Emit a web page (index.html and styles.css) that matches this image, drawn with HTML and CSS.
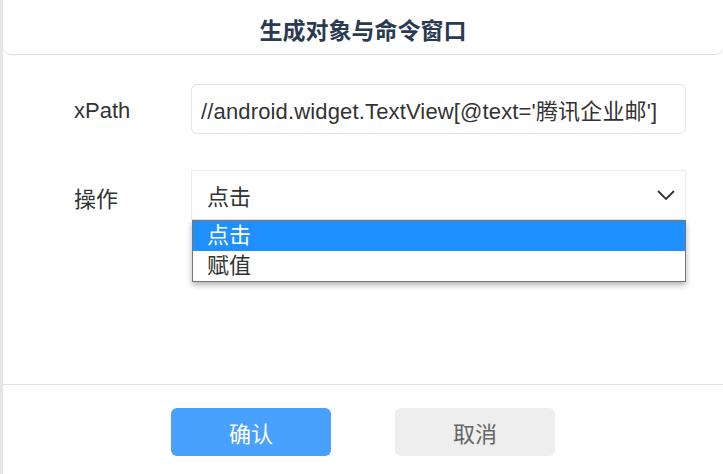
FILE: index.html
```html
<!DOCTYPE html>
<html lang="zh-CN">
<head>
    <meta charset="UTF-8">
    <meta name="viewport" content="width=device-width, initial-scale=1.0">
    <title>生成对象与命令窗口</title>
    <link rel="stylesheet" href="styles.css">
</head>
<body>
    <div class="dialog">
        <div class="dialog-header">
            <h1>生成对象与命令窗口</h1>
        </div>

        <!-- Form -->
        <div class="dialog-body">
            <div class="form-row">
                <label class="form-label" for="xpath">xPath</label>
                <input class="form-input" id="xpath" type="text" value="//android.widget.TextView[@text='腾讯企业邮']">
            </div>

            <div class="form-row">
                <label class="form-label">操作</label>
                <div class="select-wrap">
                    <div class="select-box">
                        <span>点击</span>
                        <svg class="chevron" width="18" height="10" viewBox="0 0 18 10">
                            <polyline points="1,1 9,9 17,1" fill="none" stroke="#333" stroke-width="1.8"/>
                        </svg>
                    </div>
                    <!-- open dropdown -->
                    <ul class="select-list">
                        <li class="active">点击</li>
                        <li>赋值</li>
                    </ul>
                </div>
            </div>
        </div>

        <div class="dialog-footer">
            <button class="btn btn-primary">确认</button>
            <button class="btn btn-default">取消</button>
        </div>
    </div>
</body>
</html>
```

FILE: styles.css
```css
body {
    margin: 0;
    background-color: #e6e6e6;
    font-family: "Liberation Sans", "Noto Sans CJK SC", sans-serif;
    color: #333;
}
.dialog {
    margin-left: 3px;
    height: 474px;
    background: white;
    display: flex;
    flex-direction: column;
}
.dialog-header {
    height: 54px;
    border-radius: 8px;
    box-shadow: 0 1px 1px rgba(0, 0, 0, 0.14);
    display: flex;
    align-items: center;
    justify-content: center;
}
.dialog-header h1 {
    margin: 0;
    padding-top: 4px;
    font-size: 23px;
    font-weight: bold;
    color: #2a3a52;
}
.dialog-body {
    flex: 1;
    padding: 30px 37px 0 71px;
    display: flex;
    flex-direction: column;
    gap: 36px;
}
.form-row {
    display: flex;
    align-items: center;
}
.form-label {
    width: 117px;
    padding-top: 3px;
    font-size: 22px;
    color: #333;
}
.form-input {
    flex: 1;
    height: 50px;
    box-sizing: border-box;
    padding: 0 9px;
    border: 1px solid #e3e3e3;
    border-radius: 6px;
    font-family: inherit;
    font-size: 22px;
    letter-spacing: 0.15px;
    color: #333;
    outline: none;
}
.select-wrap {
    flex: 1;
    position: relative;
}
.select-box {
    height: 50px;
    box-sizing: border-box;
    border: 1px solid #ececec;
    padding: 0 10px 0 15px;
    display: flex;
    align-items: center;
    justify-content: space-between;
    font-size: 22px;
}
.chevron {
    display: block;
}
.select-list {
    position: absolute;
    top: 50px;
    left: 1px;
    right: 0;
    margin: 0;
    padding: 0;
    list-style: none;
    background: white;
    border: 1px solid #767676;
    box-shadow: 0 3px 6px rgba(0, 0, 0, 0.3);
}
.select-list li {
    height: 30px;
    line-height: 30px;
    padding-left: 14px;
    font-size: 22px;
    color: #333;
}
.select-list li.active {
    background-color: #1e90ff;
    color: white;
}
.dialog-footer {
    height: 90px;
    border-top: 1px solid #e2e2e2;
    display: flex;
    justify-content: center;
    gap: 64px;
    padding-top: 23px;
    box-sizing: border-box;
}
.btn {
    width: 160px;
    height: 48px;
    border: none;
    border-radius: 6px;
    font-family: inherit;
    font-size: 22px;
    cursor: pointer;
}
.btn-primary {
    background-color: #48a0ff;
    color: white;
}
.btn-default {
    background-color: #eeeeee;
    color: #666;
}
```
